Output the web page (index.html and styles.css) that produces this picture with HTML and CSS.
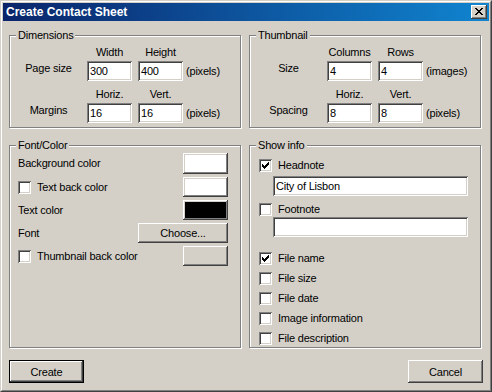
FILE: index.html
```html
<!DOCTYPE html>
<html>
<head>
<meta charset="utf-8">
<title>Create Contact Sheet</title>
<link rel="stylesheet" href="styles.css">
</head>
<body>
<div class="window">
  <div class="frame">
    <div class="titlebar">
      <span class="title">Create Contact Sheet</span>
      <button class="close" aria-label="Close">
        <svg width="16" height="14" viewBox="0 0 16 14" shape-rendering="crispEdges"><path fill="#000" d="M4 3h2v1h-2zM10 3h2v1h-2zM5 4h2v1h-2zM9 4h2v1h-2zM6 5h4v1h-4zM7 6h2v1h-2zM6 7h4v1h-4zM5 8h2v1h-2zM9 8h2v1h-2zM4 9h2v1h-2zM10 9h2v1h-2z"/></svg>
      </button>
    </div>
    <div class="content">
      <div class="groups">
        <section class="group">
          <span class="legend">Dimensions</span>
          <div class="dims">
            <span></span><span class="hdr">Width</span><span class="hdr">Height</span><span></span>
            <span class="rowlbl">Page size</span><input class="edit" type="text" value="300"><input class="edit" type="text" value="400"><span class="suffix">(pixels)</span>
            <span></span><span class="hdr">Horiz.</span><span class="hdr">Vert.</span><span></span>
            <span class="rowlbl">Margins</span><input class="edit" type="text" value="16"><input class="edit" type="text" value="16"><span class="suffix">(pixels)</span>
          </div>
        </section>
        <section class="group">
          <span class="legend">Thumbnail</span>
          <div class="dims">
            <span></span><span class="hdr">Columns</span><span class="hdr">Rows</span><span></span>
            <span class="rowlbl">Size</span><input class="edit" type="text" value="4"><input class="edit" type="text" value="4"><span class="suffix">(images)</span>
            <span></span><span class="hdr">Horiz.</span><span class="hdr">Vert.</span><span></span>
            <span class="rowlbl">Spacing</span><input class="edit" type="text" value="8"><input class="edit" type="text" value="8"><span class="suffix">(pixels)</span>
          </div>
        </section>
        <section class="group">
          <span class="legend">Font/Color</span>
          <div class="fc">
            <span class="lbl">Background color</span><button class="btn swatch white"></button>
            <span class="chk"><span class="cb"></span>Text back color</span><button class="btn swatch white"></button>
            <span class="lbl">Text color</span><button class="btn swatch black"></button>
            <span class="lbl">Font</span><button class="btn choose">Choose...</button>
            <span class="chk"><span class="cb"></span>Thumbnail back color</span><button class="btn swatch"></button>
          </div>
        </section>
        <section class="group">
          <span class="legend">Show info</span>
          <div class="info">
            <span class="chk head"><span class="cb"><svg width="13" height="13" viewBox="0 0 13 13" shape-rendering="crispEdges"><path fill="#000" d="M9 3h1v1h-1zM8 4h2v1h-2zM3 5h1v1h-1zM7 5h3v1h-3zM3 6h2v1h-2zM6 6h3v1h-3zM3 7h5v1h-5zM4 8h3v1h-3zM5 9h1v1h-1z"/></svg></span>Headnote</span>
            <input class="edit long headedit" type="text" value="City of Lisbon">
            <span class="chk foot"><span class="cb"></span>Footnote</span>
            <input class="edit long footedit" type="text" value="">
            <div class="files">
              <span class="chk"><span class="cb"><svg width="13" height="13" viewBox="0 0 13 13" shape-rendering="crispEdges"><path fill="#000" d="M9 3h1v1h-1zM8 4h2v1h-2zM3 5h1v1h-1zM7 5h3v1h-3zM3 6h2v1h-2zM6 6h3v1h-3zM3 7h5v1h-5zM4 8h3v1h-3zM5 9h1v1h-1z"/></svg></span>File name</span>
              <span class="chk"><span class="cb"></span>File size</span>
              <span class="chk"><span class="cb"></span>File date</span>
              <span class="chk"><span class="cb"></span>Image information</span>
              <span class="chk"><span class="cb"></span>File description</span>
            </div>
          </div>
        </section>
      </div>
      <div class="actions">
        <button class="btn push default">Create</button>
        <button class="btn push">Cancel</button>
      </div>
    </div>
  </div>
</div>
</body>
</html>
```

FILE: styles.css
```css
* { box-sizing: border-box; }
html, body { margin: 0; padding: 0; }
body {
  width: 492px;
  height: 392px;
  overflow: hidden;
  background: #d4d0c8;
  font-family: "Liberation Sans", Arial, sans-serif;
  font-size: 11px;
  line-height: 13px;
  letter-spacing: -0.2px;
  color: #000;
}
.window {
  width: 492px;
  height: 392px;
  border: 1px solid;
  border-color: #d4d0c8 #404040 #404040 #d4d0c8;
  background: #d4d0c8;
}
.frame {
  height: 100%;
  border: 1px solid;
  border-color: #fff #808080 #808080 #fff;
  padding: 1px;
  display: flex;
  flex-direction: column;
}
.titlebar {
  height: 18px;
  flex: none;
  display: flex;
  align-items: center;
  justify-content: space-between;
  padding: 0 2px 0 3px;
  background: linear-gradient(to right, #0a246a, #1084d0);
}
.title {
  color: #fff;
  font-weight: bold;
  font-size: 12px;
  line-height: 14px;
  letter-spacing: 0;
  white-space: nowrap;
}
.close {
  width: 16px;
  height: 14px;
  padding: 0;
  margin: 0;
  border: 0;
  background: #d4d0c8;
  box-shadow: inset -1px -1px #404040, inset 1px 1px #fff, inset -2px -2px #808080, inset 2px 2px #d4d0c8;
  display: block;
}
.close svg { display: block; }
.content {
  flex: 1;
  padding: 14px 6px 0 6px;
}
.groups {
  display: grid;
  grid-template-columns: 232px 232px;
  grid-template-rows: 93px 203px;
  column-gap: 8px;
  row-gap: 17px;
}
.group {
  position: relative;
  border: 1px solid #808080;
  box-shadow: inset 1px 1px #fff, 1px 1px #fff;
}
.legend {
  position: absolute;
  top: -7px;
  left: 6px;
  padding: 0 2px;
  background: #d4d0c8;
  line-height: 13px;
  white-space: nowrap;
}
.dims {
  display: grid;
  grid-template-columns: 77px 51px 48px auto;
  grid-template-rows: 13px 20px 18px 20px;
  row-gap: 2px;
  padding-top: 10px;
}
.hdr {
  width: 45px;
  text-align: center;
  align-self: end;
  white-space: nowrap;
}
.rowlbl {
  text-align: center;
  align-self: start;
  padding-top: 1px;
  white-space: nowrap;
}
.suffix {
  align-self: center;
  white-space: nowrap;
}
.edit {
  -webkit-appearance: none;
  appearance: none;
  width: 45px;
  height: 20px;
  margin: 0;
  border: 0;
  outline: none;
  padding: 0 2px 0 3px;
  background: #fff;
  color: #000;
  font-family: "Liberation Sans", Arial, sans-serif;
  font-size: 11px;
  letter-spacing: -0.2px;
  box-shadow: inset 1px 1px #808080, inset -1px -1px #fff, inset 2px 2px #404040, inset -2px -2px #d4d0c8;
}
.edit.long { width: 195px; margin-left: 14px; }
.btn {
  -webkit-appearance: none;
  appearance: none;
  margin: 0;
  padding: 0;
  border: 0;
  background: #d4d0c8;
  color: #000;
  font-family: "Liberation Sans", Arial, sans-serif;
  font-size: 11px;
  letter-spacing: -0.2px;
  box-shadow: inset -1px -1px #404040, inset 1px 1px #fff, inset -2px -2px #808080, inset 2px 2px #d4d0c8;
}
.fc {
  display: grid;
  grid-template-columns: 1fr auto;
  grid-template-rows: 21px 20px 20px 20px 20px;
  row-gap: 3px;
  align-items: center;
  padding: 7px 12px 0 8px;
}
.lbl { white-space: nowrap; }
.swatch {
  width: 45px;
  height: 100%;
  justify-self: end;
}
.swatch.white { background: #fff; }
.swatch.black { background: #000; }
.choose {
  width: 90px;
  height: 20px;
  justify-self: end;
}
.chk {
  display: flex;
  align-items: center;
  height: 13px;
  white-space: nowrap;
}
.cb {
  width: 13px;
  height: 13px;
  flex: none;
  margin-right: 6px;
  background: #fff;
  box-shadow: inset 1px 1px #808080, inset -1px -1px #fff, inset 2px 2px #404040, inset -2px -2px #d4d0c8;
}
.cb svg { display: block; }
.info {
  display: flex;
  flex-direction: column;
  align-items: flex-start;
  padding: 13px 0 0 9px;
}
.headedit { margin-top: 4px; }
.foot { margin-top: 7px; }
.footedit { margin-top: 1px; }
.files {
  display: flex;
  flex-direction: column;
  gap: 7px;
  margin-top: 15px;
}
.actions {
  display: flex;
  justify-content: space-between;
  margin-top: 12px;
}
.push {
  width: 75px;
  height: 23px;
}
.push.default {
  box-shadow: inset 0 0 0 1px #000, inset -2px -2px #404040, inset 2px 2px #fff, inset -3px -3px #808080, inset 3px 3px #d4d0c8;
}
```
